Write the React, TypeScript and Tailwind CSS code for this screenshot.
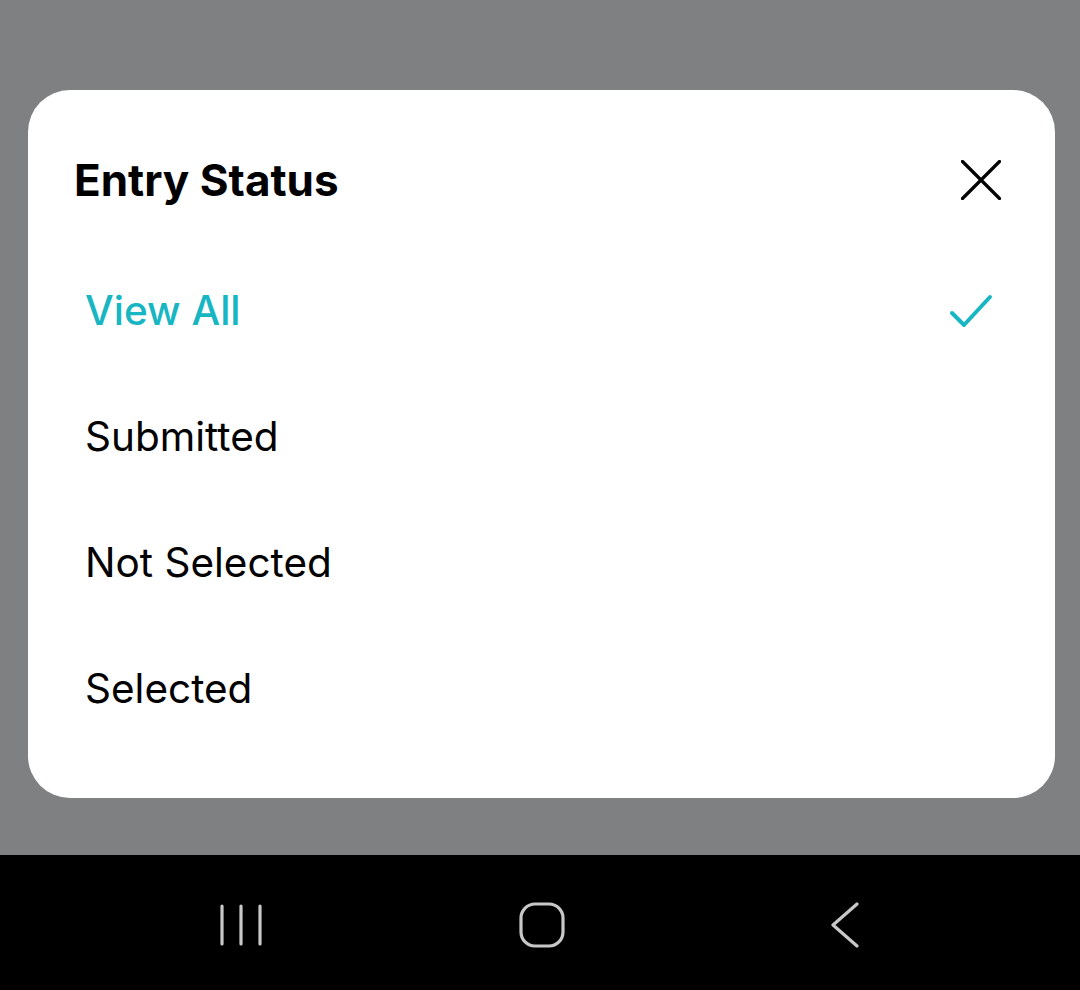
import { useState } from 'react';

const options = ['View All', 'Submitted', 'Not Selected', 'Selected'];

export default function App() {
  const [selected, setSelected] = useState('View All');

  return (
    <div
      className="flex h-[990px] w-[1080px] flex-col overflow-hidden bg-[#7f8082]"
      style={{ fontFamily: 'Inter, "Noto Sans", sans-serif' }}
    >
      <div className="flex h-[855px] flex-col pl-[28px] pr-[25px] pt-[90px]">
        <div className="flex h-[708px] flex-col rounded-[42px] bg-white">
          <header className="mb-[38px] mt-[60px] flex h-[60px] items-center justify-between pl-[46px] pr-[54px]">
            <h1 className="text-[44px] font-bold leading-none text-black">Entry Status</h1>
            <button type="button" className="flex h-[40px] w-[40px] items-center justify-center">
              <svg width="40" height="40" viewBox="0 0 40 40" fill="none">
                <path d="M1.5 1.5L38.5 38.5M38.5 1.5L1.5 38.5" stroke="#000" strokeWidth="3.2" strokeLinecap="round" />
              </svg>
            </button>
          </header>

          <ul className="flex flex-col">
            {options.map((option) => {
              const active = option === selected;
              return (
                <li key={option}>
                  <button
                    type="button"
                    onClick={() => setSelected(option)}
                    className="flex h-[126px] w-full items-center justify-between pl-[57px] pr-[62px] text-left"
                  >
                    <span
                      className={
                        active
                          ? 'text-[40.5px] font-medium leading-none text-[#17b6c2]'
                          : 'text-[40.5px] font-normal leading-none text-black'
                      }
                    >
                      {option}
                    </span>
                    {active ? (
                      <svg width="44" height="36" viewBox="0 0 44 36" fill="none">
                        <path d="M3 20L15 32L41 4" stroke="#17b6c2" strokeWidth="4" strokeLinecap="round" strokeLinejoin="round" />
                      </svg>
                    ) : null}
                  </button>
                </li>
              );
            })}
          </ul>
        </div>
      </div>

      <nav className="flex h-[135px] items-center bg-black pl-[219px] pt-[5px]">
        <svg width="44" height="44" viewBox="0 0 44 44" fill="none">
          <path d="M3 3V41M22 3V41M41 3V41" stroke="#c8c8c8" strokeWidth="3.2" strokeLinecap="round" />
        </svg>
        <svg className="ml-[256px]" width="46" height="46" viewBox="0 0 46 46" fill="none">
          <rect x="2" y="2" width="42" height="42" rx="14" stroke="#c8c8c8" strokeWidth="3.2" />
        </svg>
        <svg className="ml-[264px]" width="32" height="46" viewBox="0 0 32 46" fill="none">
          <path d="M28 2L4 23L28 44" stroke="#c8c8c8" strokeWidth="3.2" strokeLinecap="round" strokeLinejoin="round" />
        </svg>
      </nav>
    </div>
  );
}
